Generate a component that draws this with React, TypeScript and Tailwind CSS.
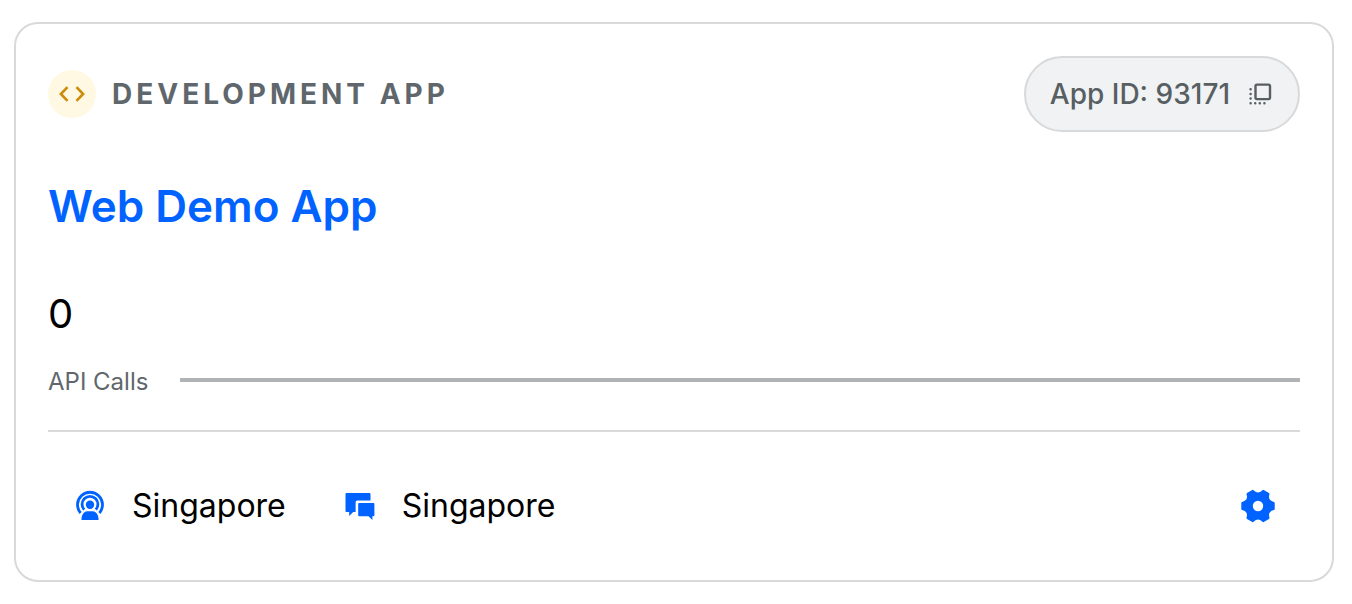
import React from 'react'

interface Region {
  product: string
  location: string
  icon: React.ReactNode
}

function CodeIcon() {
  return (
    <svg aria-hidden="true" className="size-8" viewBox="0 0 32 32" fill="none" stroke="#cc8b0a" strokeWidth="2.6">
      <path d="M11.5 9.2 4.9 16l6.6 6.8M20.5 9.2l6.6 6.8-6.6 6.8" />
    </svg>
  )
}

function CopyIcon() {
  return (
    <svg aria-hidden="true" className="size-7" viewBox="0 0 28 28" fill="none" stroke="currentColor">
      <rect x="9.5" y="4.6" width="14.5" height="14.5" rx="1.5" strokeWidth="2.4" />
      <path
        d="M4.6 9.2h.01M4.6 13.9h.01M4.6 18.6h.01M4.6 23.2h.01M9.2 23.2h.01M13.8 23.2h.01M18.4 23.2h.01"
        strokeWidth="2.5"
        strokeLinecap="round"
      />
    </svg>
  )
}

function LiveIcon() {
  return (
    <svg aria-hidden="true" className="size-9" viewBox="0 0 36 36" fill="none">
      <path
        d="M8.6 25A12.5 12.5 0 1 1 27.4 25M12.2 21.6A7.9 7.9 0 1 1 23.8 21.6"
        stroke="#0062ff"
        strokeWidth="2.8"
      />
      <path
        d="M8.8 32.8v-2.2c0-4.4 2.8-8 6.4-8h5.6c3.6 0 6.4 3.6 6.4 8v2.2z"
        fill="#0062ff"
        stroke="#fff"
        strokeWidth="1.4"
      />
      <circle cx="18" cy="16.8" r="4.2" fill="#0062ff" />
    </svg>
  )
}

function ChatIcon() {
  return (
    <svg aria-hidden="true" className="size-9" viewBox="0 0 36 36" fill="#0062ff">
      <path d="M4.5 5h23a1 1 0 0 1 1 1v6.6H15.2a1.6 1.6 0 0 0-1.6 1.6V24h-2.4l-4 4v-4H4.5a1 1 0 0 1-1-1V6a1 1 0 0 1 1-1z" />
      <path d="M17.2 15h14.2a1 1 0 0 1 1 1v11.2a1 1 0 0 1-1 1h-1v3.9l-3.9-3.9h-9.3a1 1 0 0 1-1-1V16a1 1 0 0 1 1-1z" />
    </svg>
  )
}

function GearIcon() {
  return (
    <svg aria-hidden="true" className="size-9" viewBox="-18 -18 36 36">
      <path
        fillRule="evenodd"
        d="M15.6-3V3Q8.3 4.8 10.4 12L5.2 15Q0 9.6-5.2 15L-10.4 12Q-8.3 4.8-15.6 3V-3Q-8.3-4.8-10.4-12L-5.2-15Q0-9.6 5.2-15L10.4-12Q8.3-4.8 15.6-3ZM6.3 0A6.3 6.3 0 1 0-6.3 0 6.3 6.3 0 1 0 6.3 0Z"
        fill="#0062ff"
        stroke="#0062ff"
        strokeWidth="2.2"
        strokeLinejoin="round"
      />
    </svg>
  )
}

const regions: Region[] = [
  { product: 'Live', location: 'Singapore', icon: <LiveIcon /> },
  { product: 'Chat', location: 'Singapore', icon: <ChatIcon /> },
]

export default function App() {
  return (
    <main className="bg-white pt-[22px] pr-[18px] pb-[22px] pl-[14px] font-['Inter',sans-serif]">
      <article className="rounded-3xl border-2 border-[#d8d9da] p-8">
        <header className="flex items-center justify-between">
          <div className="flex items-center gap-4">
            <span className="flex size-12 items-center justify-center rounded-full bg-[#fff8e3]">
              <CodeIcon />
            </span>
            <span className="text-[28px] leading-9 font-bold tracking-[4px] text-[#60676c] uppercase">
              Development App
            </span>
          </div>
          <button
            type="button"
            aria-label="Copy App ID: 93171"
            className="flex h-[76px] items-center gap-4 rounded-full border-2 border-[#d8d9da] bg-[#f0f2f4] px-6 text-[28px] font-medium text-[#585f62]"
          >
            App ID: 93171
            <CopyIcon />
          </button>
        </header>

        <h2 className="mt-12 text-[44px] leading-[52px] font-semibold text-[#0062ff]">
          <a href="#app">Web Demo App</a>
        </h2>

        <p className="mt-13 text-[40px] leading-[60px] text-black">0</p>
        <div className="mt-5 flex items-center gap-8">
          <span className="text-2xl leading-9 text-[#60676c]">API Calls</span>
          <div className="mb-1 h-1 flex-1 bg-[#b0b3b5]" />
        </div>

        <footer className="mt-[30px] flex items-center justify-between border-t-2 border-[#d8d9da] px-6 pt-[52px] pb-5">
          <ul className="flex items-center gap-14">
            {regions.map((region) => (
              <li key={region.product} className="flex items-center gap-6 text-[32px] leading-11 text-black">
                {region.icon}
                {region.location}
              </li>
            ))}
          </ul>
          <button type="button" aria-label="App settings">
            <GearIcon />
          </button>
        </footer>
      </article>
    </main>
  )
}
